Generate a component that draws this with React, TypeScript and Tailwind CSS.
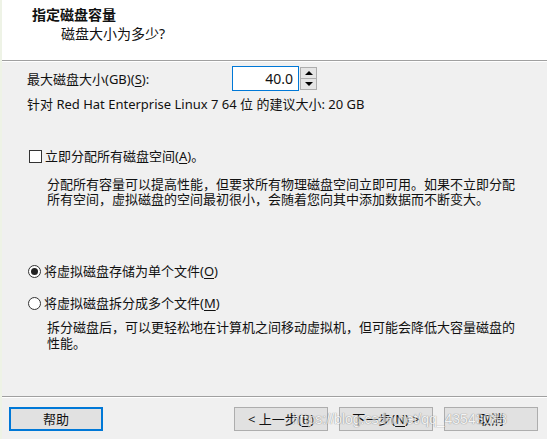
const font = "font-['Noto_Sans','Noto_Sans_CJK_SC',sans-serif]";

function Key({ k }: { k: string }) {
  return (
    <>
      (<span className="underline underline-offset-2">{k}</span>)
    </>
  );
}

function Radio({ checked }: { checked?: boolean }) {
  return (
    <span className="flex h-[13px] w-[13px] shrink-0 items-center justify-center rounded-full border border-[#333] bg-white">
      {checked && <span className="h-[7px] w-[7px] rounded-full bg-[#222]" />}
    </span>
  );
}

function Button({ children, primary }: { children: React.ReactNode; primary?: boolean }) {
  return (
    <div
      className={
        "flex h-[24px] w-[94px] items-center justify-center bg-[#e1e1e1] text-[#111] " +
        (primary ? "border-2 border-[#0078d7]" : "border border-[#adadad]")
      }
    >
      {children}
    </div>
  );
}

export default function App() {
  return (
    <div className={`relative flex h-[439px] w-[547px] flex-col border-l-2 border-[#eef3e6] bg-[#f0f0f0] ${font} text-[13px] leading-[18px] text-[#111]`}>
      {/* header */}
      <div className="h-[60px] bg-white text-[14px]">
        <div className="pl-[30px] pt-[6px] font-bold">指定磁盘容量</div>
        <div className="pl-[59px] pt-px">磁盘大小为多少?</div>
      </div>
      <div className="h-px bg-[#a0a0a0]" />
      <div className="h-px bg-white" />

      {/* size row */}
      <div className="mt-[4px] flex h-[25px] items-center pl-[25px]">
        <div className="w-[205px]">
          最大磁盘大小(GB)<Key k="S" />:
        </div>
        <div className="flex h-[25px] w-[67px] items-center justify-end border border-[#0078d7] bg-white pr-[5px] text-[14px]">
          40.0
        </div>
        <div className="ml-px flex h-[23px] w-[17px] flex-col border border-[#adadad] bg-[#e5e5e5]">
          <div className="flex flex-1 items-center justify-center border-b border-[#adadad]">
            <span className="h-0 w-0 border-x-[4px] border-b-[4px] border-x-transparent border-b-black" />
          </div>
          <div className="flex flex-1 items-center justify-center">
            <span className="h-0 w-0 border-x-[4px] border-t-[4px] border-x-transparent border-t-black" />
          </div>
        </div>
      </div>
      <div className="mt-[4px] pl-[25px]">针对 Red Hat Enterprise Linux 7 64 位 的建议大小: 20 GB</div>

      {/* allocate */}
      <div className="mt-[34px] flex items-center gap-[3px] pl-[27px]">
        <span className="h-[13px] w-[13px] border border-[#333] bg-white" />
        <span>
          立即分配所有磁盘空间<Key k="A" />。
        </span>
      </div>
      <div className="mt-[12px] whitespace-nowrap pl-[45px] leading-[15px]">
        <div>分配所有容量可以提高性能，但要求所有物理磁盘空间立即可用。如果不立即分配</div>
        <div>所有空间，虚拟磁盘的空间最初很小，会随着您向其中添加数据而不断变大。</div>
      </div>

      {/* storage mode */}
      <div className="mt-[55px] flex items-center gap-[3px] pl-[26px]">
        <Radio checked />
        <span>
          将虚拟磁盘存储为单个文件<Key k="O" />
        </span>
      </div>
      <div className="mt-[14px] flex items-center gap-[3px] pl-[26px]">
        <Radio />
        <span>
          将虚拟磁盘拆分成多个文件<Key k="M" />
        </span>
      </div>
      <div className="mt-[7px] whitespace-nowrap pl-[45px] leading-[16px]">
        <div>拆分磁盘后，可以更轻松地在计算机之间移动虚拟机，但可能会降低大容量磁盘的</div>
        <div>性能。</div>
      </div>

      {/* footer */}
      <div className="mt-auto">
        <div className="h-px bg-[#a0a0a0]" />
        <div className="h-px bg-white" />
        <div className="flex justify-between pb-[8px] pl-[7px] pr-[9px] pt-[9px]">
          <Button primary>帮助</Button>
          <div className="flex gap-[11px]">
            <Button>
              &lt; 上一步<Key k="B" />
            </Button>
            <Button>
              下一步<Key k="N" /> &gt;
            </Button>
            <Button>取消</Button>
          </div>
        </div>
      </div>

      {/* watermark */}
      <div className="pointer-events-none absolute left-[290px] top-[410px] font-['Liberation_Sans',sans-serif] text-[14px] text-white opacity-60 [text-shadow:0_0_1px_#666,0_0_1px_#666]">
        https://blog.csdn.net/qq_43543088
      </div>
    </div>
  );
}
